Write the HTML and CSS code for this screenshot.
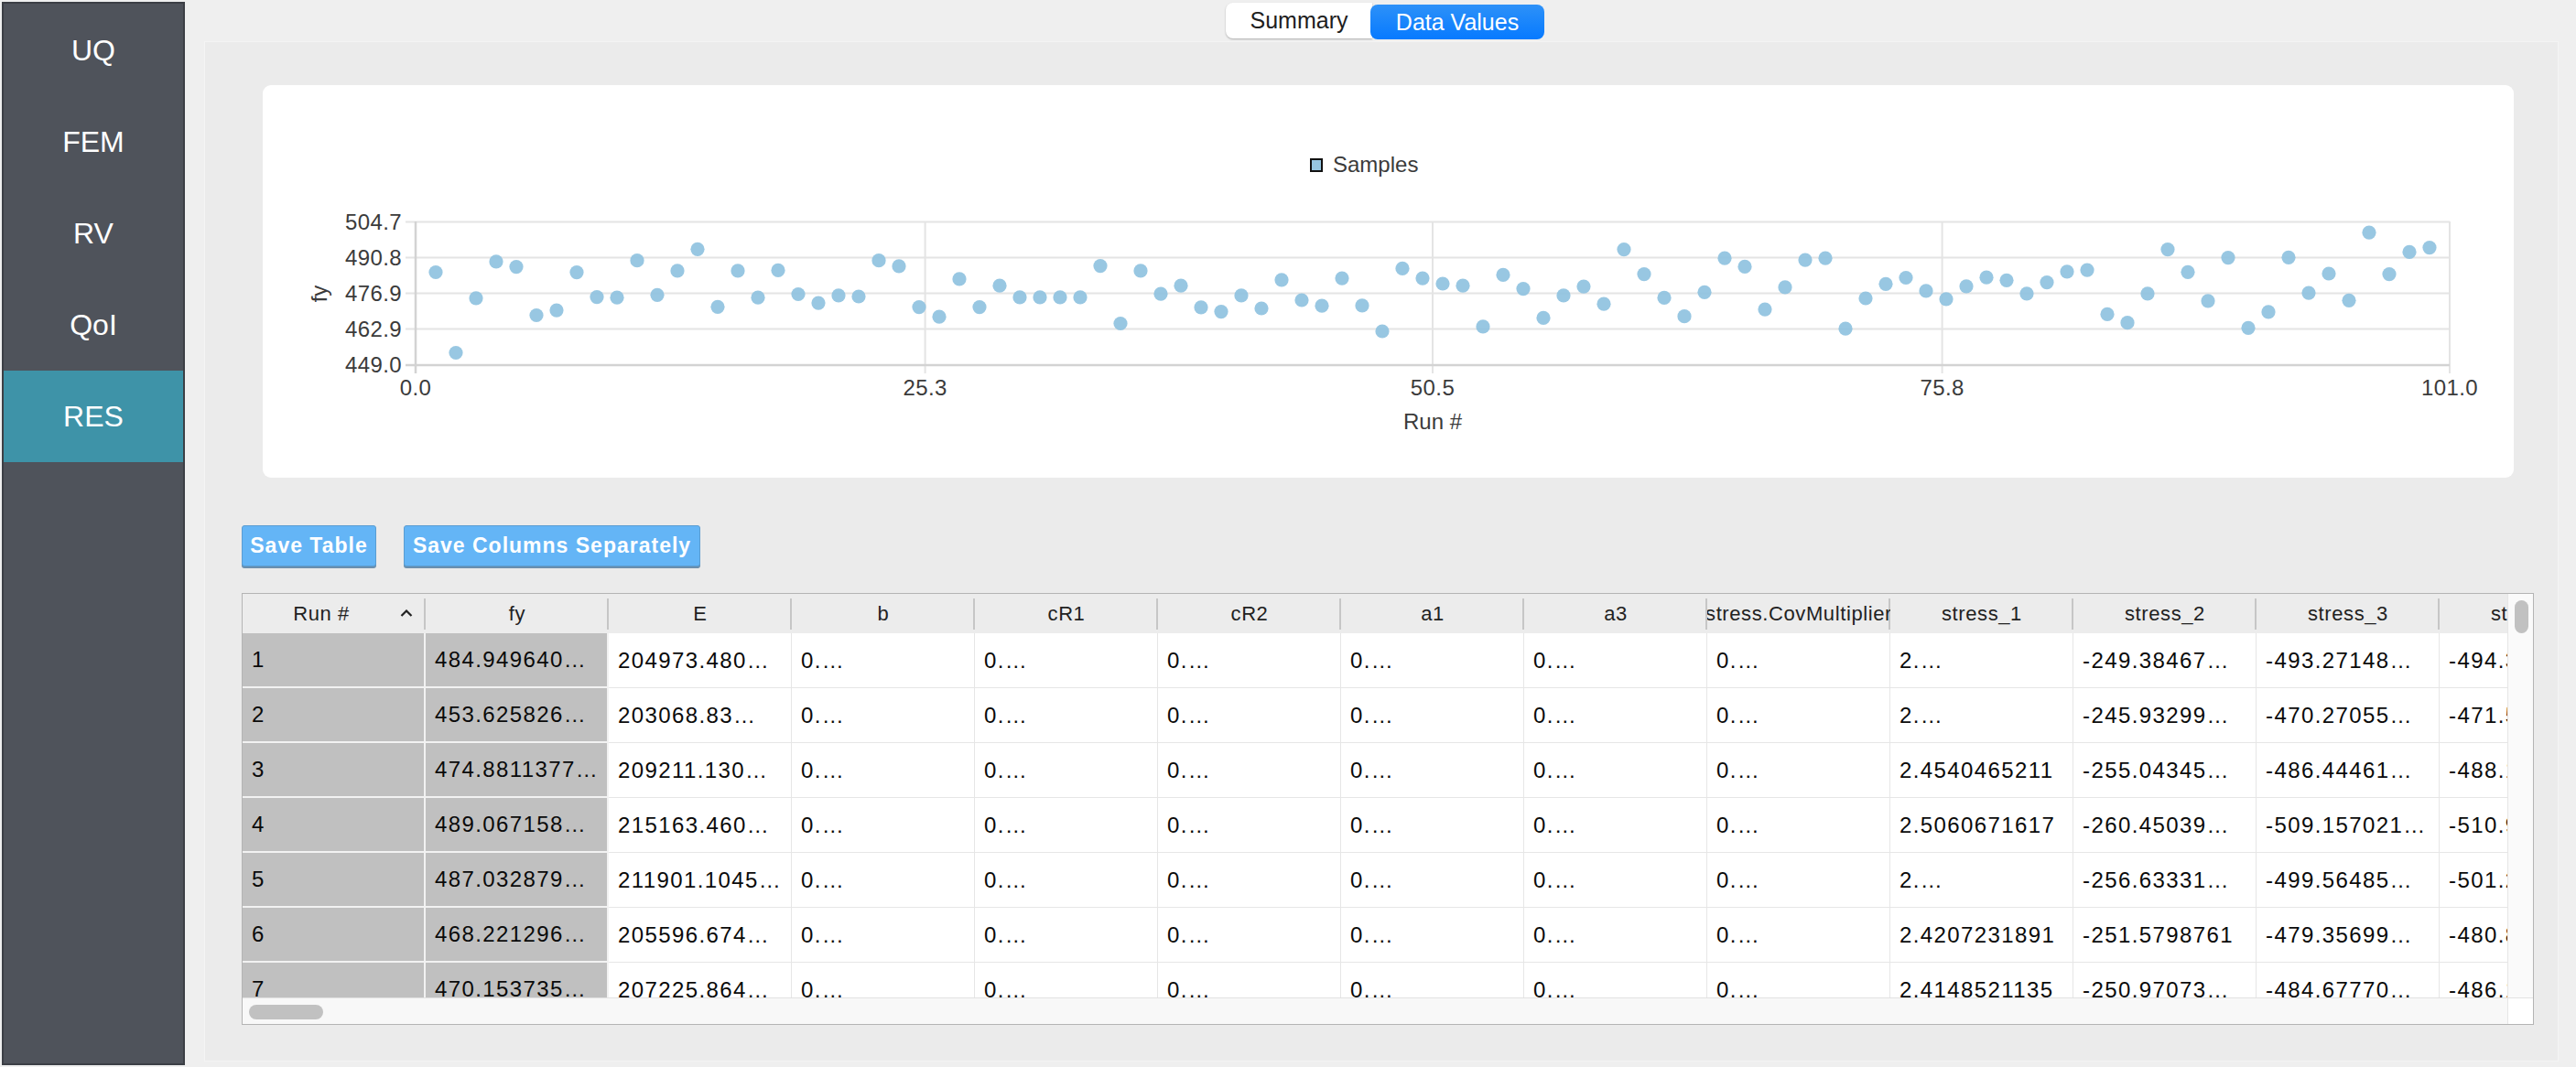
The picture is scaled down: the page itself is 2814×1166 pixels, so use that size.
FILE: index.html
```html
<!DOCTYPE html>
<html>
<head>
<meta charset="utf-8">
<title>RES - Data Values</title>
<link rel="stylesheet" href="styles.css">
</head>
<body>
<div class="app">
  <nav class="sidebar">
    <div class="nav-item">UQ</div>
    <div class="nav-item">FEM</div>
    <div class="nav-item">RV</div>
    <div class="nav-item">QoI</div>
    <div class="nav-item active">RES</div>
  </nav>
  <main class="main">
    <div class="tabs">
      <div class="tab">Summary</div>
      <div class="tab selected">Data Values</div>
    </div>
    <section class="panel">
      <div class="chart-card">
        <svg class="chart" width="2459" height="429" viewBox="0 0 2459 429">
          <g class="grid">
            <line x1="156" y1="149.5" x2="2389" y2="149.5"/>
            <line x1="156" y1="188.5" x2="2389" y2="188.5"/>
            <line x1="156" y1="227.5" x2="2389" y2="227.5"/>
            <line x1="156" y1="266.5" x2="2389" y2="266.5"/>
            <line x1="723.6" y1="149" x2="723.6" y2="315"/>
            <line x1="1278" y1="149" x2="1278" y2="315"/>
            <line x1="1834.6" y1="149" x2="1834.6" y2="315"/>
            <line x1="2389" y1="149" x2="2389" y2="315"/>
          </g>
          <g class="axis">
            <line x1="156" y1="306" x2="2389" y2="306"/>
            <line x1="167" y1="149" x2="167" y2="315"/>
          </g>
          <g class="ylabels">
            <text x="152" y="158">504.7</text>
            <text x="152" y="197">490.8</text>
            <text x="152" y="236">476.9</text>
            <text x="152" y="275">462.9</text>
            <text x="152" y="314">449.0</text>
          </g>
          <g class="xlabels">
            <text x="167" y="339">0.0</text>
            <text x="723.6" y="339">25.3</text>
            <text x="1278" y="339">50.5</text>
            <text x="1834.6" y="339">75.8</text>
            <text x="2389" y="339">101.0</text>
          </g>
          <text class="axis-title" x="1278" y="376">Run #</text>
          <text class="axis-title" transform="translate(70 228) rotate(-90)">fy</text>
          <rect class="legend-swatch" x="1145" y="81" width="12" height="13"/>
          <text class="legend-text" x="1169" y="95">Samples</text>
          <g id="dots"></g>
        </svg>
      </div>

      <div class="actions">
        <button class="btn btn-table">Save Table</button>
        <button class="btn btn-cols">Save Columns Separately</button>
      </div>

      <div class="table">
        <div class="viewport">
          <div class="row head">
            <div class="hcell run"><span class="htext">Run #</span><svg class="sort" width="14" height="8" viewBox="0 0 14 8"><path d="M1.5 7 L7 1.5 L12.5 7"/></svg></div>
            <div class="hcell"><span>fy</span></div>
            <div class="hcell"><span>E</span></div>
            <div class="hcell"><span>b</span></div>
            <div class="hcell"><span>cR1</span></div>
            <div class="hcell"><span>cR2</span></div>
            <div class="hcell"><span>a1</span></div>
            <div class="hcell"><span>a3</span></div>
            <div class="hcell"><span>stress.CovMultiplier</span></div>
            <div class="hcell"><span>stress_1</span></div>
            <div class="hcell"><span>stress_2</span></div>
            <div class="hcell"><span>stress_3</span></div>
            <div class="hcell"><span>stress_4</span></div>
          </div>
          <div class="row">
            <div class="cell key">1</div><div class="cell key">484.949640…</div><div class="cell">204973.480…</div>
            <div class="cell">0.…</div><div class="cell">0.…</div><div class="cell">0.…</div><div class="cell">0.…</div><div class="cell">0.…</div><div class="cell">0.…</div>
            <div class="cell">2.…</div><div class="cell">-249.38467…</div><div class="cell">-493.27148…</div><div class="cell">-494.3672…</div>
          </div>
          <div class="row">
            <div class="cell key">2</div><div class="cell key">453.625826…</div><div class="cell">203068.83…</div>
            <div class="cell">0.…</div><div class="cell">0.…</div><div class="cell">0.…</div><div class="cell">0.…</div><div class="cell">0.…</div><div class="cell">0.…</div>
            <div class="cell">2.…</div><div class="cell">-245.93299…</div><div class="cell">-470.27055…</div><div class="cell">-471.5204…</div>
          </div>
          <div class="row">
            <div class="cell key">3</div><div class="cell key">474.8811377…</div><div class="cell">209211.130…</div>
            <div class="cell">0.…</div><div class="cell">0.…</div><div class="cell">0.…</div><div class="cell">0.…</div><div class="cell">0.…</div><div class="cell">0.…</div>
            <div class="cell">2.4540465211</div><div class="cell">-255.04345…</div><div class="cell">-486.44461…</div><div class="cell">-488.1127…</div>
          </div>
          <div class="row">
            <div class="cell key">4</div><div class="cell key">489.067158…</div><div class="cell">215163.460…</div>
            <div class="cell">0.…</div><div class="cell">0.…</div><div class="cell">0.…</div><div class="cell">0.…</div><div class="cell">0.…</div><div class="cell">0.…</div>
            <div class="cell">2.5060671617</div><div class="cell">-260.45039…</div><div class="cell">-509.157021…</div><div class="cell">-510.9823…</div>
          </div>
          <div class="row">
            <div class="cell key">5</div><div class="cell key">487.032879…</div><div class="cell">211901.1045…</div>
            <div class="cell">0.…</div><div class="cell">0.…</div><div class="cell">0.…</div><div class="cell">0.…</div><div class="cell">0.…</div><div class="cell">0.…</div>
            <div class="cell">2.…</div><div class="cell">-256.63331…</div><div class="cell">-499.56485…</div><div class="cell">-501.2716…</div>
          </div>
          <div class="row">
            <div class="cell key">6</div><div class="cell key">468.221296…</div><div class="cell">205596.674…</div>
            <div class="cell">0.…</div><div class="cell">0.…</div><div class="cell">0.…</div><div class="cell">0.…</div><div class="cell">0.…</div><div class="cell">0.…</div>
            <div class="cell">2.4207231891</div><div class="cell">-251.5798761</div><div class="cell">-479.35699…</div><div class="cell">-480.8841…</div>
          </div>
          <div class="row">
            <div class="cell key">7</div><div class="cell key">470.153735…</div><div class="cell">207225.864…</div>
            <div class="cell">0.…</div><div class="cell">0.…</div><div class="cell">0.…</div><div class="cell">0.…</div><div class="cell">0.…</div><div class="cell">0.…</div>
            <div class="cell">2.4148521135</div><div class="cell">-250.97073…</div><div class="cell">-484.67770…</div><div class="cell">-486.1359…</div>
          </div>
        </div>
        <div class="vscroll"><div class="vthumb"></div></div>
        <div class="hscroll"><div class="hthumb"></div></div>
        <div class="corner"></div>
      </div>
    </section>
  </main>
</div>
<script src="script.js"></script>
</body>
</html>
```

FILE: styles.css
```css
* { box-sizing: border-box; }
html, body { margin: 0; height: 100%; }
body {
  background: #efefef;
  font-family: "Liberation Sans", Arial, sans-serif;
  overflow: hidden;
}
.app { display: flex; height: 1166px; }

/* sidebar */
.sidebar {
  width: 200px;
  margin: 2px 0 2px 2px;
  background: #4f535b;
  border: 2px solid #3c3f45;
  padding-top: 1px;
  display: flex;
  flex-direction: column;
}
.nav-item {
  height: 100px;
  display: flex;
  align-items: center;
  justify-content: center;
  color: #fff;
  font-size: 32px;
}
.nav-item.active { background: #3e93a8; }

/* main */
.main {
  flex: 1;
  min-width: 0;
  display: flex;
  flex-direction: column;
}
.tabs {
  height: 45px;
  padding: 3px 0 0 10px;
  display: flex;
  justify-content: center;
  align-items: flex-start;
}
.tab {
  height: 39px;
  display: flex;
  align-items: center;
  justify-content: center;
  font-size: 25px;
  color: #1e1e1e;
}
.tab:first-child {
  width: 160px;
  background: #fff;
  border-radius: 8px 0 0 8px;
  box-shadow: 0 1px 2px rgba(0,0,0,.28);
}
.tab.selected {
  width: 190px;
  margin-left: -2px;
  margin-top: 2px;
  height: 38px;
  color: #fff;
  border-radius: 8px;
  background: linear-gradient(#2d91f8, #077aff);
}

.panel {
  flex: 1;
  margin: 0 19px 6px 21px;
  background: #ebebeb;
  border: 1px solid #f4f4f4;
  padding: 47px 26px 0 40px;
  display: flex;
  flex-direction: column;
}

/* chart */
.chart-card {
  margin: 0 22px 0 23px;
  height: 429px;
  background: #fff;
  border-radius: 9px;
  overflow: hidden;
}
.chart { display: block; font-family: "Liberation Sans", Arial, sans-serif; }
.grid line { stroke: #e4e4e4; stroke-width: 2; }
.axis line { stroke: #d3d3d3; stroke-width: 2.5; }
.ylabels text { font-size: 24px; fill: #3b3b3b; text-anchor: end; letter-spacing: 0.4px; }
.xlabels text { font-size: 24px; fill: #3b3b3b; text-anchor: middle; letter-spacing: 0.4px; }
.axis-title { font-size: 24px; fill: #3b3b3b; text-anchor: middle; }
.legend-swatch { fill: #96c6e1; stroke: #111; stroke-width: 2; }
.legend-text { font-size: 24px; fill: #3b3b3b; }
.dot { fill: #8fc2df; fill-opacity: 0.92; }

/* buttons */
.actions {
  margin-top: 52px;
  display: flex;
  gap: 30px;
}
.btn {
  height: 45px;
  padding: 0;
  border: 1px solid #5b9dd2;
  border-radius: 3px;
  background: #64b5f6;
  box-shadow: 0 2px 0 #6a8fae;
  color: #fff;
  font-family: "Liberation Sans", Arial, sans-serif;
  font-weight: bold;
  font-size: 23px;
  letter-spacing: 1px;
}
.btn-table { width: 147px; }
.btn-cols { width: 324px; }

/* table */
.table {
  margin-top: 29px;
  height: 472px;
  border: 1px solid #b4b4b4;
  background: #fff;
  display: grid;
  grid-template-columns: 1fr 28px;
  grid-template-rows: 1fr 29px;
}
.viewport { overflow: hidden; min-width: 0; }
.row {
  display: grid;
  grid-template-columns: repeat(13, 200px);
  height: 60px;
}
.row.head { height: 43px; background: #ececec; }
.hcell {
  display: flex;
  align-items: center;
  justify-content: center;
  overflow: hidden;
  white-space: nowrap;
  font-size: 22px;
  letter-spacing: 0.6px;
  color: #222;
  background: linear-gradient(#c6c6c6, #c6c6c6) right center / 2px 34px no-repeat;
}
.hcell.run { justify-content: flex-start; }
.htext { flex: 1; text-align: center; }
.sort { margin: 0 14px 2px 0; }
.sort path { fill: none; stroke: #222; stroke-width: 2.2; }
.cell {
  display: flex;
  align-items: center;
  padding-left: 10px;
  border-right: 1px solid #e6e6e6;
  border-bottom: 1px solid #e6e6e6;
  overflow: hidden;
  white-space: nowrap;
  font-size: 24px;
  letter-spacing: 1.4px;
  color: #0a0a0a;
}
.cell.key {
  background: #c0c0c0;
  border-right: 2px solid #f2f2f2;
  border-bottom: 2px solid #f2f2f2;
}
.vscroll {
  background: #fafafa;
  border-left: 1px solid #e6e6e6;
  padding: 7px 0 0 7px;
}
.vthumb { width: 15px; height: 36px; border-radius: 8px; background: #c1c1c1; }
.hscroll {
  background: #f8f8f8;
  border-top: 1px solid #e2e2e2;
  padding: 7px 0 0 7px;
}
.hthumb { width: 81px; height: 16px; border-radius: 8px; background: #c1c1c1; }
.corner { background: #fff; border-left: 1px solid #e6e6e6; border-top: 1px solid #e2e2e2; }
```

FILE: script.js
```js
var fy = [
  484.95, 453.63, 474.88, 489.07, 487.03, 468.22, 470.15, 484.9, 475.3, 475.1,
  489.5, 476.1, 485.5, 493.9, 471.5, 485.5, 475.1, 485.7, 476.4, 473.0,
  475.9, 475.5, 489.5, 487.3, 471.4, 467.6, 482.3, 471.4, 479.7, 475.2,
  475.2, 475.2, 475.2, 487.4, 465.0, 485.5, 476.5, 479.7, 471.3, 469.6,
  475.9, 470.9, 482.0, 474.1, 471.9, 482.6, 472.0, 462.0, 486.4, 482.6,
  480.5, 479.7, 463.8, 483.9, 478.5, 467.2, 475.9, 479.4, 472.6, 493.8,
  484.2, 475.0, 467.8, 477.2, 490.4, 487.1, 470.5, 479.1, 489.7, 490.4,
  463.0, 474.8, 480.4, 482.8, 477.7, 474.5, 479.5, 482.9, 481.8, 476.6,
  481.0, 485.2, 485.8, 468.6, 465.3, 476.6, 493.8, 485.0, 473.8, 490.6,
  463.3, 469.5, 490.7, 476.9, 484.4, 474.0, 500.4, 484.2, 492.8, 494.5
];
var NS = "http://www.w3.org/2000/svg";
var g = document.getElementById("dots");
fy.forEach(function (v, i) {
  var c = document.createElementNS(NS, "circle");
  c.setAttribute("cx", (167 + 22 * (i + 1)).toFixed(1));
  c.setAttribute("cy", (305.5 - (v - 449) * 2.81).toFixed(1));
  c.setAttribute("r", "7.6");
  c.setAttribute("class", "dot");
  g.appendChild(c);
});
```
